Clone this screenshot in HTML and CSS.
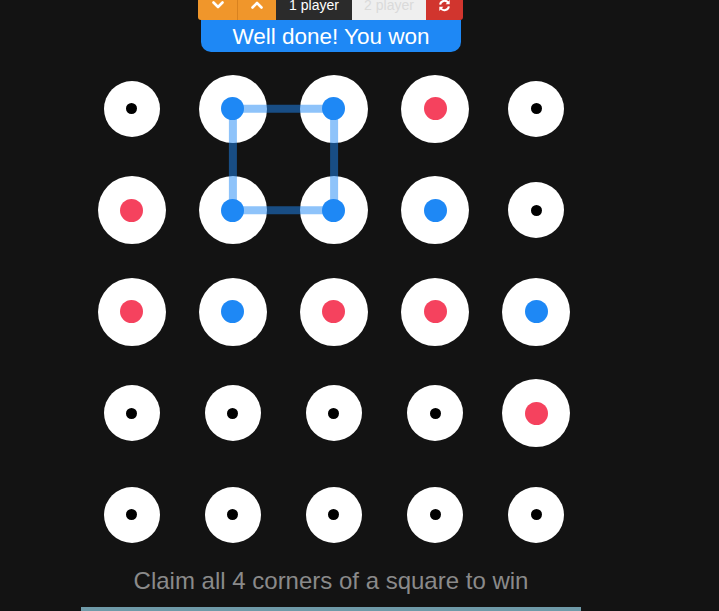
FILE: index.html
```html
<!DOCTYPE html>
<html>
<head>
<meta charset="utf-8">
<link rel="stylesheet" href="styles.css">
</head>
<body>
<div class="app">
  <div class="toolbar">
    <button class="btn btn-orange">
      <svg width="12" height="8" viewBox="0 0 12 8"><path d="M1.5 1.5 L6 6 L10.5 1.5" fill="none" stroke="#fff" stroke-width="2.6" stroke-linecap="round" stroke-linejoin="round"/></svg>
    </button>
    <button class="btn btn-orange btn-sep">
      <svg width="12" height="8" viewBox="0 0 12 8"><path d="M1.5 6.5 L6 2 L10.5 6.5" fill="none" stroke="#fff" stroke-width="2.6" stroke-linecap="round" stroke-linejoin="round"/></svg>
    </button>
    <button class="btn btn-dark">1 player</button>
    <button class="btn btn-light">2 player</button>
    <button class="btn btn-red">
      <svg width="13" height="13" viewBox="0 0 14 14"><path d="M2.3 6 A4.8 4.8 0 0 1 11 4" fill="none" stroke="#fff" stroke-width="2.2"/><path d="M12.6 1.2 L12.6 5.6 L8.2 5.6 Z" fill="#fff"/><path d="M11.7 8 A4.8 4.8 0 0 1 3 10" fill="none" stroke="#fff" stroke-width="2.2"/><path d="M1.4 12.8 L1.4 8.4 L5.8 8.4 Z" fill="#fff"/></svg>
    </button>
  </div>
  <div class="banner">Well done! You won</div>
  <div class="board">
    <div class="cell"><div class="disc"><div class="pin"></div></div></div>
    <div class="cell"><div class="disc big"><div class="dot blue"></div></div></div>
    <div class="cell"><div class="disc big"><div class="dot blue"></div></div></div>
    <div class="cell"><div class="disc big"><div class="dot red"></div></div></div>
    <div class="cell"><div class="disc"><div class="pin"></div></div></div>

    <div class="cell"><div class="disc big"><div class="dot red"></div></div></div>
    <div class="cell"><div class="disc big"><div class="dot blue"></div></div></div>
    <div class="cell"><div class="disc big"><div class="dot blue"></div></div></div>
    <div class="cell"><div class="disc big"><div class="dot blue"></div></div></div>
    <div class="cell"><div class="disc"><div class="pin"></div></div></div>

    <div class="cell"><div class="disc big"><div class="dot red"></div></div></div>
    <div class="cell"><div class="disc big"><div class="dot blue"></div></div></div>
    <div class="cell"><div class="disc big"><div class="dot red"></div></div></div>
    <div class="cell"><div class="disc big"><div class="dot red"></div></div></div>
    <div class="cell"><div class="disc big"><div class="dot blue"></div></div></div>

    <div class="cell"><div class="disc"><div class="pin"></div></div></div>
    <div class="cell"><div class="disc"><div class="pin"></div></div></div>
    <div class="cell"><div class="disc"><div class="pin"></div></div></div>
    <div class="cell"><div class="disc"><div class="pin"></div></div></div>
    <div class="cell"><div class="disc big"><div class="dot red"></div></div></div>

    <div class="cell"><div class="disc"><div class="pin"></div></div></div>
    <div class="cell"><div class="disc"><div class="pin"></div></div></div>
    <div class="cell"><div class="disc"><div class="pin"></div></div></div>
    <div class="cell"><div class="disc"><div class="pin"></div></div></div>
    <div class="cell"><div class="disc"><div class="pin"></div></div></div>

    <svg class="lines" width="506" height="508" viewBox="0 0 506 508">
      <g stroke="rgba(30,136,245,0.5)" stroke-width="8" fill="none">
        <line x1="151.9" y1="50.75" x2="253.1" y2="50.75"/>
        <line x1="253.1" y1="50.75" x2="253.1" y2="152.25"/>
        <line x1="253.1" y1="152.25" x2="151.9" y2="152.25"/>
        <line x1="151.9" y1="152.25" x2="151.9" y2="50.75"/>
      </g>
    </svg>
  </div>
  <p class="hint">Claim all 4 corners of a square to win</p>
  <div class="footer-bar"></div>
</div>
</body>
</html>
```

FILE: styles.css
```css
html, body {
  margin: 0;
  padding: 0;
  background: #131313;
  overflow: hidden;
}

.app {
  width: 500px;
  margin-left: 81px;
  display: flex;
  flex-direction: column;
  align-items: center;
  font-family: "Liberation Sans", Arial, sans-serif;
}

.toolbar {
  display: flex;
  height: 30px;
  margin-top: -10px;
  margin-left: -1px;
}

.btn {
  border: 0;
  margin: 0;
  padding: 0;
  height: 30px;
  display: flex;
  align-items: center;
  justify-content: center;
  font-family: "Liberation Sans", Arial, sans-serif;
  font-size: 14px;
}

.btn-orange {
  width: 39px;
  background: #f0962b;
}

.btn-orange:first-child {
  border-bottom-left-radius: 3px;
}

.btn-sep {
  box-shadow: inset 1px 0 0 #d9821f;
}

.btn-dark {
  width: 76px;
  background: #2b2b2b;
  color: #ffffff;
}

.btn-light {
  width: 74px;
  background: #efefef;
  color: #dadada;
}

.btn-red {
  width: 37px;
  background: #d1352e;
  border-bottom-right-radius: 3px;
}

.banner {
  width: 260px;
  height: 32px;
  background: #1e88f5;
  color: #ffffff;
  font-size: 22.5px;
  line-height: 33px;
  text-align: center;
  border-radius: 0 0 10px 10px;
}

.board {
  position: relative;
  align-self: flex-start;
  margin-top: 6px;
  display: grid;
  grid-template-columns: repeat(5, 101.2px);
  grid-template-rows: repeat(5, 101.5px);
}

.cell {
  display: flex;
  align-items: center;
  justify-content: center;
}

.disc {
  width: 56px;
  height: 56px;
  border-radius: 50%;
  background: #ffffff;
  display: flex;
  align-items: center;
  justify-content: center;
}

.disc.big {
  width: 68px;
  height: 68px;
}

.pin {
  width: 11px;
  height: 11px;
  border-radius: 50%;
  background: #000000;
}

.dot {
  position: relative;
  z-index: 2;
  width: 23px;
  height: 23px;
  border-radius: 50%;
}

.dot.blue {
  background: #1e88f5;
}

.dot.red {
  background: #f5425e;
}

.lines {
  position: absolute;
  left: 0;
  top: 0;
  z-index: 1;
  pointer-events: none;
}

.hint {
  margin: 1px 0 0 0;
  font-size: 24px;
  line-height: 28px;
  color: #8a8a8a;
  text-align: center;
}

.footer-bar {
  margin-top: 12px;
  width: 500px;
  height: 20px;
  background: #6f9aa8;
}
```
